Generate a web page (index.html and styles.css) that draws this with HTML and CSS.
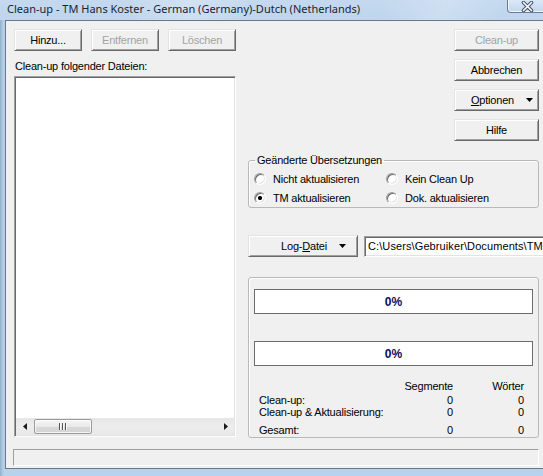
FILE: index.html
```html
<!DOCTYPE html>
<html lang="de">
<head>
<meta charset="utf-8">
<title>Clean-up</title>
<link rel="stylesheet" href="styles.css">
</head>
<body>
<div class="window">
  <div class="titlebar">
    <span class="title">Clean-up - TM Hans Koster - German (Germany)-Dutch (Netherlands)</span>
    <div class="close">
      <svg width="13" height="11" viewBox="0 0 13 11"><path d="M2.5 1.5 L10.5 9.5 M10.5 1.5 L2.5 9.5" stroke="#3d4d63" stroke-width="3.6" stroke-linecap="round"/><path d="M2.5 1.5 L10.5 9.5 M10.5 1.5 L2.5 9.5" stroke="#ffffff" stroke-width="1.7" stroke-linecap="round"/></svg>
    </div>
  </div>
  <div class="frame">
    <div class="client">
      <div class="main">
        <div class="left">
          <div class="btnrow">
            <div class="btn w68">Hinzu...</div>
            <div class="btn w68 disabled">Entfernen</div>
            <div class="btn w68 disabled">Löschen</div>
          </div>
          <div class="label">Clean-up folgender Dateien:</div>
          <div class="listbox">
            <div class="listarea"></div>
            <div class="hscroll">
              <div class="arrow"><svg width="4" height="7" viewBox="0 0 4 7"><path d="M4 0 L0 3.5 L4 7 Z" fill="#1a1a1a"/></svg></div>
              <div class="thumb"><span class="grip"></span><span class="grip"></span><span class="grip"></span></div>
              <div class="track"></div>
              <div class="arrow"><svg width="4" height="7" viewBox="0 0 4 7"><path d="M0 0 L4 3.5 L0 7 Z" fill="#1a1a1a"/></svg></div>
            </div>
          </div>
        </div>
        <div class="right">
          <div class="actions">
            <div class="btn w85 disabled">Clean-up</div>
            <div class="btn w85">Abbrechen</div>
            <div class="btn w85 menu-btn opt"><span><u>O</u>ptionen</span><svg class="caret" width="7" height="4" viewBox="0 0 7 4"><path d="M0 0 H7 L3.5 4 Z" fill="#000"/></svg></div>
            <div class="btn w85">Hilfe</div>
          </div>
          <fieldset class="group">
            <legend>Geänderte Übersetzungen</legend>
            <div class="radios">
              <label class="radio-item"><span class="radio"></span>Nicht aktualisieren</label>
              <label class="radio-item"><span class="radio"></span>Kein Clean Up</label>
              <label class="radio-item"><span class="radio checked"></span>TM aktualisieren</label>
              <label class="radio-item"><span class="radio"></span>Dok. aktualisieren</label>
            </div>
          </fieldset>
          <div class="logrow">
            <div class="btn menu-btn log"><span>Log-<u>D</u>atei</span><svg class="caret" width="7" height="4" viewBox="0 0 7 4"><path d="M0 0 H7 L3.5 4 Z" fill="#000"/></svg></div>
            <div class="textbox">C:\Users\Gebruiker\Documents\TM Hans Koster\Clean-up.log</div>
          </div>
          <div class="progress-group">
            <div class="bar">0%</div>
            <div class="bar second">0%</div>
            <div class="stats">
              <span></span><span class="num">Segmente</span><span class="num">Wörter</span>
              <span>Clean-up:</span><span class="num">0</span><span class="num">0</span>
              <span>Clean-up &amp; Aktualisierung:</span><span class="num">0</span><span class="num">0</span>
              <span>Gesamt:</span><span class="num">0</span><span class="num">0</span>
            </div>
          </div>
        </div>
      </div>
      <div class="statusbar"></div>
    </div>
  </div>
</div>
</body>
</html>
```
FILE: styles.css
```css
* { box-sizing: border-box; }
html, body { margin: 0; padding: 0; }
body {
  width: 543px;
  height: 476px;
  overflow: hidden;
  font-family: "Liberation Sans", Arial, sans-serif;
  font-size: 11px;
  letter-spacing: -0.2px;
  color: #000;
  background: #b9d1ea;
}
.window {
  width: 552px;
  height: 476px;
  display: flex;
  flex-direction: column;
  background:
    linear-gradient(100deg, rgba(255,255,255,0) 20%, rgba(255,255,255,0.25) 30%, rgba(255,255,255,0) 40%, rgba(255,255,255,0) 60%, rgba(255,255,255,0.2) 70%, rgba(255,255,255,0) 80%),
    linear-gradient(to bottom, #c4d9ef 0, #bcd3ec 30px, #b6cfe9 100%);
}
.titlebar {
  height: 20px;
  display: flex;
  align-items: flex-start;
}
.title {
  font-family: "Noto Sans", "Open Sans", sans-serif;
  font-size: 11px;
  letter-spacing: 0;
  line-height: 17px;
  margin-left: 7px;
  color: #1c2430;
}
.close {
  margin-left: auto;
  margin-right: 2px;
  width: 43px;
  height: 13px;
  border: 1px solid #687a95;
  border-top: none;
  border-radius: 0 0 4px 4px;
  background: linear-gradient(to bottom, #dbe8f6, #c4d7ed);
  box-shadow: inset 0 -1px 0 rgba(255,255,255,0.8), inset 1px 0 0 rgba(255,255,255,0.7), inset -1px 0 0 rgba(255,255,255,0.7);
  display: flex;
  justify-content: center;
  align-items: center;
  padding-right: 3px;
}
.close svg { display: block; }
.frame {
  flex: 1;
  padding: 0 4px 7px 5px;
  background: linear-gradient(to right, #8fb0c8 0, #b3cde8 3px, #b9d2eb 5px);
}
.client {
  height: 449px;
  border: 1px solid #6a7888;
  background: #f0f0f0;
  padding: 8px 8px 0 8px;
  display: flex;
  flex-direction: column;
}
.main {
  height: 409px;
  display: flex;
  gap: 12px;
}
.left {
  width: 222px;
  display: flex;
  flex-direction: column;
}
.right {
  width: 291px;
  display: flex;
  flex-direction: column;
}
.btnrow {
  display: flex;
  gap: 9px;
}
.btn {
  height: 22px;
  display: flex;
  align-items: center;
  justify-content: center;
  background: #f0f0f0;
  border: 1px solid;
  border-color: #e3e3e3 #696969 #696969 #e3e3e3;
  box-shadow: inset 1px 1px 0 #ffffff, inset -1px -1px 0 #a0a0a0;
  white-space: nowrap;
}
.btn.disabled { color: #a3a3a3; }
.w68 { width: 68px; }
.w85 { width: 85px; }
.label {
  margin-top: 9px;
  line-height: 13px;
  padding-left: 1px;
}
.listbox {
  margin-top: 3px;
  height: 361px;
  display: flex;
  flex-direction: column;
  background: #fff;
  border: 1px solid;
  border-color: #a0a0a0 #ffffff #ffffff #a0a0a0;
  box-shadow: inset 1px 1px 0 #696969, inset -1px -1px 0 #e3e3e3;
  padding: 1px;
}
.listarea { flex: 1; }
.hscroll {
  height: 17px;
  display: flex;
  align-items: center;
  background: linear-gradient(to bottom, #e6e6e6, #ededed 50%, #e8e8e8);
}
.arrow {
  width: 17px;
  height: 17px;
  display: flex;
  align-items: center;
  justify-content: center;
}
.thumb {
  width: 58px;
  height: 15px;
  margin-left: 1px;
  border: 1px solid #9a9a9a;
  border-radius: 2px;
  background: linear-gradient(to bottom, #f6f6f6, #e9e9e9 50%, #d9d9d9 51%, #d4d4d4);
  box-shadow: inset 0 0 0 1px rgba(255,255,255,0.7);
  display: flex;
  justify-content: center;
  align-items: center;
  gap: 1px;
}
.grip {
  width: 2px;
  height: 7px;
  border-left: 1px solid #555;
  border-right: 1px solid #fafafa;
}
.track { flex: 1; }
.actions {
  display: flex;
  flex-direction: column;
  align-items: flex-end;
  gap: 8px;
}
.menu-btn {
  justify-content: flex-end;
  gap: 12px;
}
.opt { padding-right: 5px; }
.log { width: 110px; padding-right: 11px; flex: none; }
.caret { display: block; }
.group {
  margin: 13px 0 0 0;
  padding: 2px 6px 0 6px;
  height: 54px;
  border: 1px solid #b9b9b9;
  border-radius: 3px;
  box-shadow: inset 1px 1px 0 #fff;
}
.group legend {
  padding: 0 2px;
  line-height: 13px;
}
.radios {
  display: grid;
  grid-template-columns: 132px 1fr;
  grid-auto-rows: 19px;
}
.radio-item {
  display: flex;
  align-items: center;
  gap: 7px;
  margin-left: -1px;
}
.radio {
  width: 12px;
  height: 12px;
  border-radius: 50%;
  border: 1px solid;
  border-color: #a0a0a0 #ffffff #ffffff #a0a0a0;
  background: #fff;
  box-shadow: inset 1px 1px 0 #696969, inset -1px -1px 0 #e3e3e3;
  flex: none;
}
.radio.checked {
  background: radial-gradient(circle at 50% 50%, #000 0, #000 1.7px, #fff 2.4px);
}
.logrow {
  margin-top: 27px;
  display: flex;
  gap: 6px;
  align-items: flex-start;
}
.textbox {
  flex: none;
  width: 182px;
  height: 21px;
  margin-top: 1px;
  background: #fff;
  border: 1px solid;
  border-color: #a0a0a0 #ffffff #ffffff #a0a0a0;
  box-shadow: inset 1px 1px 0 #696969, inset -1px -1px 0 #e3e3e3;
  padding: 0 0 0 3px;
  line-height: 18px;
  white-space: nowrap;
  overflow: hidden;
  letter-spacing: 0.1px;
}
.progress-group {
  margin-top: 20px;
  height: 161px;
  border: 1px solid #b9b9b9;
  border-radius: 3px;
  box-shadow: inset 1px 1px 0 #fff;
  padding: 11px 5px 0 5px;
  display: flex;
  flex-direction: column;
}
.bar {
  height: 25px;
  border: 1px solid #6c6c6c;
  background: #fff;
  display: flex;
  align-items: center;
  justify-content: center;
  font-weight: bold;
  font-size: 12px;
  letter-spacing: 0;
  color: #0c0c5e;
}
.bar.second { margin-top: 27px; }
.stats {
  margin-top: 14px;
  padding: 0 9px 0 5px;
  display: grid;
  grid-template-columns: 1fr 60px 71px;
  grid-template-rows: 12px 14px 12px 18px;
  align-items: end;
  line-height: 12px;
}
.num { text-align: right; }
.statusbar {
  margin: 11px 0 0 -1px;
  width: 526px;
  height: 17px;
  border: 1px solid;
  border-color: #a0a0a0 #ffffff #ffffff #a0a0a0;
}
```
